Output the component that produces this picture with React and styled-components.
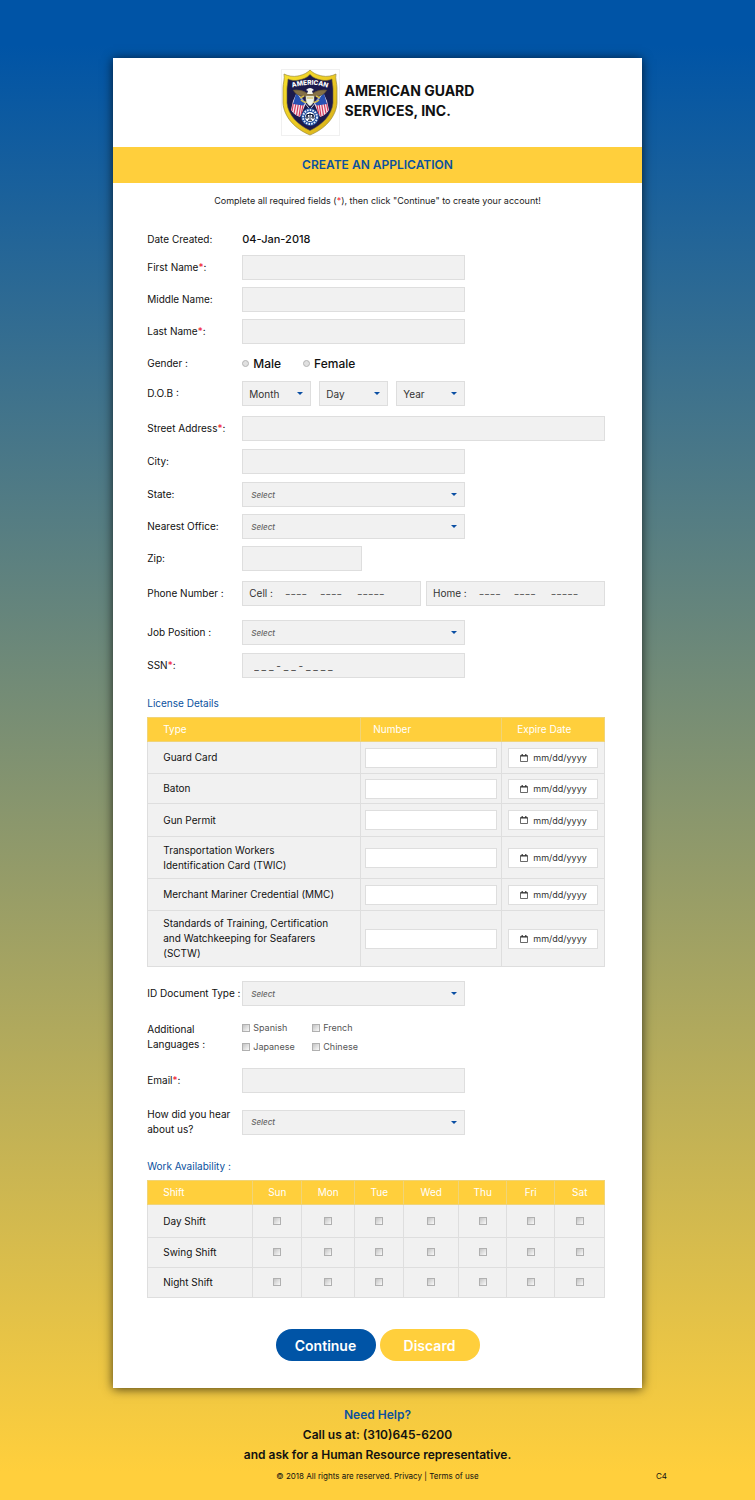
import styled, { createGlobalStyle } from "styled-components";

const days = [
  { name: "Sun", width: 49 },
  { name: "Mon", width: 53 },
  { name: "Tue", width: 49 },
  { name: "Wed", width: 55 },
  { name: "Thu", width: 48 },
  { name: "Fri", width: 48 },
  { name: "Sat", width: 50 },
];

const licenses = [
  { name: "Guard Card", height: 32 },
  { name: "Baton", height: 30 },
  { name: "Gun Permit", height: 33 },
  { name: "Transportation Workers Identification Card (TWIC)", height: 42 },
  { name: "Merchant Mariner Credential (MMC)", height: 32 },
  {
    name: "Standards of Training, Certification and Watchkeeping for Seafarers (SCTW)",
    height: 56,
  },
];

const shifts = [
  { name: "Day Shift", height: 33 },
  { name: "Swing Shift", height: 30 },
  { name: "Night Shift", height: 30 },
];

function Flag() {
  return (
    <g>
      <path d="M16 23 L25 34 L19 48 Q13 46 10 41 L12 32 Z" fill="#f6e6ec" />
      <path
        d="M12.500 34 L11 42 M15 34 L13 44.500 M17.500 34 L15.500 46.500 M20 34 L18 47.500 M22.500 34 L20 46"
        stroke="#d23a5c"
        strokeWidth="1.200"
      />
      <path d="M15.500 23 L25 34 L22 36.500 L12 35 Z" fill="#2750b4" />
      <path d="M15 23 L31 43" stroke="#cfd6e8" strokeWidth="0.900" />
    </g>
  );
}

function Badge() {
  return (
    <svg width="59" height="67" viewBox="0 0 59 67" role="img" aria-label="American Guard Services">
      <defs>
        <linearGradient id="gold" x1="0" y1="0" x2="1" y2="1">
          <stop offset="0" stopColor="#f7e12e" />
          <stop offset="0.5" stopColor="#ecca22" />
          <stop offset="1" stopColor="#d4ac18" />
        </linearGradient>
        <path id="arcTop" d="M9 19.500 Q29 12 49 19.500" />
      </defs>
      <rect x="0.500" y="0.500" width="58" height="66" fill="#fff" stroke="#f0f0f0" />
      <path
        d="M29 1 C25 5 21 6 17 7 C12 8 7 7 3 5 C4 10 2 14 2 19 L2 34 C3 48 14 60 29 66 C44 60 55 48 56 34 L56 19 C56 14 54 10 55 5 C51 7 46 8 41 7 C37 6 33 5 29 1 Z"
        fill="url(#gold)"
        stroke="#9b8a3a"
        strokeWidth="0.700"
      />
      <path
        d="M29 5.500 C26 9 22 10 18 11 C14 12 10 11.500 7 10 C7 14 6 17 6 20 L6 34 C7 46 17 56 29 61.500 C41 56 51 46 52 34 L52 20 C52 17 51 14 51 10 C48 11.500 44 12 40 11 C36 10 32 9 29 5.500 Z"
        fill="#1c1a4c"
        stroke="#6e6136"
        strokeWidth="0.600"
      />
      <text fill="#fff" fontFamily="Inter, sans-serif" fontSize="6.500" fontWeight="800" textAnchor="middle">
        <textPath href="#arcTop" startOffset="50%">
          AMERICAN
        </textPath>
      </text>
      <Flag />
      <g transform="translate(58 0) scale(-1 1)">
        <Flag />
      </g>
      <path
        d="M26 24 Q20 20 12 21 Q15 27 24 27.500 L27 30 H31 L34 27.500 Q43 27 46 21 Q38 20 32 24 Z"
        fill="#857047"
        stroke="#4d4330"
        strokeWidth="0.500"
      />
      <path d="M25 21 Q29 17 33 21 L31 22 L32 25 H26 L27 22 Z" fill="#f4f4ee" />
      <path d="M19 29 L23 27 M39 29 L35 27 M20 31 Q23 34 26 33 M38 31 Q35 34 32 33" fill="none" stroke="#d5bd4c" strokeWidth="1.600" />
      <path d="M25 27 H33 V31 Q32.500 35 29 37 Q25.500 35 25 31 Z" fill="#eef2e8" stroke="#b9b58a" strokeWidth="0.500" />
      <path d="M26 29 H32" stroke="#c9b244" strokeWidth="1" />
      <circle cx="29" cy="48" r="9" fill="#1f4c9c" />
      <circle cx="29" cy="48" r="7" fill="none" stroke="#e4eefa" strokeWidth="2" strokeDasharray="1.700 1" />
      <circle cx="29" cy="48" r="5" fill="#fff" />
      <path
        d="M29 44 V51 M26 45.500 H32 M26 45.500 L24.800 49 H27.200 Z M32 45.500 L30.800 49 H33.200 Z M27 51.300 H31"
        fill="none"
        stroke="#111a38"
        strokeWidth="1"
      />
    </svg>
  );
}

function CalendarIcon() {
  return (
    <svg width="8" height="8" viewBox="0 0 8 8" aria-hidden="true">
      <path d="M0.500 1.500 H7.500 V7.500 H0.500 Z" fill="none" stroke="#444" strokeWidth="0.800" />
      <path d="M0.500 2 H7.500 M2.200 0 V2 M5.800 0 V2" stroke="#333" strokeWidth="1.200" />
    </svg>
  );
}

function Dropdown({ id, label, text = "Select", hint = true }) {
  return (
    <SelectWrap>
      <Select id={id} aria-label={label} $hint={hint}>
        <option>{text}</option>
      </Select>
      <Caret width="6" height="3" viewBox="0 0 6 3" aria-hidden="true">
        <path d="M0 0 H6 L3 3 Z" fill="#0a4fa3" />
      </Caret>
    </SelectWrap>
  );
}

function Phone({ name }) {
  return (
    <PhoneBox role="group" aria-label={name + " phone"}>
      <span>{name} :</span>
      <PhonePart aria-label={name + " area code"} placeholder="----" />
      <PhonePart aria-label={name + " prefix"} placeholder="----" />
      <PhonePart aria-label={name + " line number"} placeholder="-----" $last />
    </PhoneBox>
  );
}

export default function App() {
  return (
    <>
      <GlobalStyle />
      <Page>
        <Card>
          <Header>
            <Badge />
            <Company>
              AMERICAN GUARD
              <br />
              SERVICES, INC.
            </Company>
          </Header>
          <Banner>CREATE AN APPLICATION</Banner>
          <Intro>
            Complete all required fields (<Star>*</Star>), then click "Continue" to create your account!
          </Intro>

          <Form onSubmit={(e) => e.preventDefault()}>
            <Row $gap={0}>
              <Label as="span">Date Created:</Label>
              <Created>04-Jan-2018</Created>
            </Row>
            <Row $gap={3}>
              <Label htmlFor="first">
                First Name<Star>*</Star>:
              </Label>
              <Half>
                <Field id="first" />
              </Half>
            </Row>
            <Row $gap={7}>
              <Label htmlFor="middle">Middle Name:</Label>
              <Half>
                <Field id="middle" />
              </Half>
            </Row>
            <Row $gap={7}>
              <Label htmlFor="last">
                Last Name<Star>*</Star>:
              </Label>
              <Half>
                <Field id="last" />
              </Half>
            </Row>
            <Row $gap={7}>
              <Label as="span">Gender :</Label>
              <Genders>
                <Choice>
                  <Radio name="gender" /> Male
                </Choice>
                <Choice>
                  <Radio name="gender" /> Female
                </Choice>
              </Genders>
            </Row>
            <Row $gap={5}>
              <Label as="span">D.O.B :</Label>
              <Birth>
                <Dropdown label="Month" text="Month" hint={false} />
                <Dropdown label="Day" text="Day" hint={false} />
                <Dropdown label="Year" text="Year" hint={false} />
              </Birth>
            </Row>
            <Row $gap={10}>
              <Label htmlFor="street">
                Street Address<Star>*</Star>:
              </Label>
              <Field id="street" />
            </Row>
            <Row>
              <Label htmlFor="city">City:</Label>
              <Half>
                <Field id="city" />
              </Half>
            </Row>
            <Row>
              <Label htmlFor="state">State:</Label>
              <Half>
                <Dropdown id="state" />
              </Half>
            </Row>
            <Row $gap={7}>
              <Label htmlFor="office">Nearest Office:</Label>
              <Half>
                <Dropdown id="office" />
              </Half>
            </Row>
            <Row $gap={7}>
              <Label htmlFor="zip">Zip:</Label>
              <Third>
                <Field id="zip" />
              </Third>
            </Row>
            <Row $gap={10}>
              <Label as="span">Phone Number :</Label>
              <Phones>
                <Phone name="Cell" />
                <Phone name="Home" />
              </Phones>
            </Row>
            <Row $gap={14}>
              <Label htmlFor="job">Job Position :</Label>
              <Half>
                <Dropdown id="job" />
              </Half>
            </Row>
            <Row>
              <Label htmlFor="ssn">
                SSN<Star>*</Star>:
              </Label>
              <Half>
                <Field id="ssn" placeholder="_ _ _ - _ _ - _ _ _ _" />
              </Half>
            </Row>

            <SectionTitle $gap={18}>License Details</SectionTitle>
            <Table>
              <colgroup>
                <Col $width={213} />
                <Col $width={141} />
                <Col $width={103} />
              </colgroup>
              <thead>
                <tr>
                  <Th $pad={15}>Type</Th>
                  <Th $pad={12}>Number</Th>
                  <Th $pad={15}>Expire Date</Th>
                </tr>
              </thead>
              <tbody>
                {licenses.map((item) => (
                  <TableRow key={item.name} $height={item.height}>
                    <NameCell>{item.name}</NameCell>
                    <NumberCell>
                      <WhiteField aria-label={item.name + " number"} />
                    </NumberCell>
                    <DateCell>
                      <DateBox>
                        <CalendarIcon />
                        <DateInput aria-label={item.name + " expire date"} placeholder="mm/dd/yyyy" />
                      </DateBox>
                    </DateCell>
                  </TableRow>
                ))}
              </tbody>
            </Table>

            <Row $gap={14}>
              <Label htmlFor="document">ID Document Type :</Label>
              <Half>
                <Dropdown id="document" />
              </Half>
            </Row>
            <Row $gap={14}>
              <Label as="span">
                Additional
                <br />
                Languages :
              </Label>
              <Languages>
                {["Spanish", "French", "Japanese", "Chinese"].map((language) => (
                  <Language key={language}>
                    <Checkbox /> {language}
                  </Language>
                ))}
              </Languages>
            </Row>
            <Row $gap={14}>
              <Label htmlFor="email">
                Email<Star>*</Star>:
              </Label>
              <Half>
                <Field id="email" type="email" />
              </Half>
            </Row>
            <Row $gap={14}>
              <Label htmlFor="hear">
                How did you hear
                <br />
                about us?
              </Label>
              <Half>
                <Dropdown id="hear" />
              </Half>
            </Row>

            <SectionTitle $gap={22}>Work Availability :</SectionTitle>
            <Table>
              <colgroup>
                <Col $width={105} />
                {days.map((day) => (
                  <Col key={day.name} $width={day.width} />
                ))}
              </colgroup>
              <thead>
                <tr>
                  <Th $pad={15}>Shift</Th>
                  {days.map((day) => (
                    <Th key={day.name} $center>
                      {day.name}
                    </Th>
                  ))}
                </tr>
              </thead>
              <tbody>
                {shifts.map((shift) => (
                  <TableRow key={shift.name} $height={shift.height}>
                    <NameCell>{shift.name}</NameCell>
                    {days.map((day) => (
                      <CheckCell key={day.name}>
                        <Checkbox aria-label={shift.name + " " + day.name} />
                      </CheckCell>
                    ))}
                  </TableRow>
                ))}
              </tbody>
            </Table>

            <Actions>
              <Button type="submit">Continue</Button>
              <Button type="button" $yellow>
                Discard
              </Button>
            </Actions>
          </Form>
        </Card>

        <Footer>
          <Help>
            <a href="#help">Need Help?</a>
            <br />
            Call us at: (310)645-6200
            <br />
            and ask for a Human Resource representative.
          </Help>
          <Legal>
            <span>
              © 2018 All rights are reserved. <a href="#privacy">Privacy</a> | <a href="#terms">Terms of use</a>
            </span>
            <Code>C4</Code>
          </Legal>
        </Footer>
      </Page>
    </>
  );
}

const GlobalStyle = createGlobalStyle`
  * {
    box-sizing: border-box;
  }

  body {
    margin: 0;
    font-family: Inter, "Liberation Sans", sans-serif;
    font-size: 10px;
    line-height: 15px;
    color: #111;
  }

  input, select, button {
    font-family: inherit;
    margin: 0;
  }

  a {
    color: inherit;
    text-decoration: none;
  }
`;

const Page = styled.div`
  min-height: 100vh;
  padding-top: 58px;
  background: linear-gradient(#0054a6 3%, #ffcf3c 98%);
`;

const Card = styled.main`
  width: 70%;
  margin: 0 auto;
  background: #fff;
  box-shadow: 0 1px 10px rgba(0, 0, 0, 0.7);
`;

const Header = styled.header`
  display: flex;
  justify-content: center;
  align-items: center;
  gap: 5px;
  height: 89px;
`;

const Company = styled.div`
  padding-bottom: 4px;
  font-size: 14px;
  line-height: 20px;
  font-weight: 700;
`;

const Banner = styled.h1`
  margin: 0;
  padding: 8px;
  background: #ffcf3c;
  color: #0b519e;
  font-size: 12px;
  line-height: 20px;
  font-weight: 600;
  text-align: center;
`;

const Intro = styled.p`
  margin: 10px 0 0;
  font-size: 9px;
  text-align: center;
  color: #222;
`;

const Star = styled.span`
  color: #f0142f;
`;

const Form = styled.form`
  padding: 19px 37px 27px 34px;
`;

const Row = styled.div`
  display: grid;
  grid-template-columns: 95px 1fr;
  align-items: center;
  min-height: 25px;
  margin-top: ${({ $gap = 8 }) => $gap}px;
`;

const Label = styled.label`
  white-space: nowrap;
`;

const Created = styled.span`
  font-size: 11px;
  font-weight: 500;
`;

const Half = styled.div`
  width: 100%;
  max-width: 223px;
`;

const Third = styled.div`
  width: 33%;
`;

const Field = styled.input`
  display: block;
  width: 100%;
  height: 25px;
  padding: 0 11px;
  border: 1px solid #dedede;
  background: #f1f1f1;
  font-size: 10px;

  &::placeholder {
    color: #444;
  }
`;

const SelectWrap = styled.div`
  position: relative;
`;

const Select = styled.select`
  display: block;
  appearance: none;
  width: 100%;
  height: 25px;
  padding: 0 ${({ $hint }) => ($hint ? 8 : 6)}px;
  border: 1px solid #dedede;
  border-radius: 0;
  background: #f1f1f1;
  color: ${({ $hint }) => ($hint ? "#666" : "#333")};
  font-size: ${({ $hint }) => ($hint ? 8 : 10)}px;
  font-style: ${({ $hint }) => ($hint ? "italic" : "normal")};
  font-weight: ${({ $hint }) => ($hint ? 500 : 400)};
`;

const Caret = styled.svg`
  position: absolute;
  top: 11px;
  right: 8px;
  pointer-events: none;
`;

const Genders = styled.div`
  display: flex;
  gap: 22px;
`;

const Choice = styled.label`
  display: flex;
  align-items: center;
  gap: 4px;
  font-size: 12px;
  font-weight: 500;
`;

const Radio = styled.input.attrs({ type: "radio" })`
  appearance: none;
  width: 7px;
  height: 7px;
  border: 1px solid #b4b4b4;
  border-radius: 50%;
  background: #e0e0e0;
`;

const Birth = styled.div`
  display: grid;
  grid-template-columns: 1fr 1fr 1fr;
  gap: 8px;
  width: 100%;
  max-width: 223px;
`;

const Phones = styled.div`
  display: grid;
  grid-template-columns: 1fr 1fr;
  gap: 5px;
`;

const PhoneBox = styled.div`
  display: flex;
  align-items: center;
  gap: 12px;
  height: 25px;
  padding: 0 6px;
  border: 1px solid #dedede;
  background: #f1f1f1;
  color: #333;
`;

const PhonePart = styled.input`
  width: ${({ $last }) => ($last ? 32 : 23)}px;
  margin-left: ${({ $last }) => ($last ? 2 : 0)}px;
  padding: 0;
  border: 0;
  background: transparent;
  font-size: 12px;

  &::placeholder {
    color: #666;
  }
`;

const SectionTitle = styled.h2`
  margin: ${({ $gap }) => $gap}px 0 6px;
  color: #0b519e;
  font-size: 10px;
  line-height: 15px;
  font-weight: 400;
`;

const Table = styled.table`
  width: 100%;
  border-collapse: collapse;
  table-layout: fixed;
  background: #f1f1f1;
`;

const Col = styled.col`
  width: ${({ $width }) => $width}px;
`;

const Th = styled.th`
  height: 24px;
  padding: 0 0 0 ${({ $pad = 0 }) => $pad}px;
  border: 1px solid #f0d478;
  background: #ffcf3c;
  color: #fff;
  font-weight: 400;
  text-align: ${({ $center }) => ($center ? "center" : "left")};
`;

const TableRow = styled.tr`
  height: ${({ $height }) => $height}px;
`;

const Cell = styled.td`
  padding: 0;
  border: 1px solid #dedede;
`;

const NameCell = styled(Cell)`
  padding: 0 25px 0 15px;
`;

const NumberCell = styled(Cell)`
  padding: 0 4px;
`;

const DateCell = styled(Cell)`
  padding: 0 6px;
`;

const CheckCell = styled(Cell)`
  text-align: center;
`;

const WhiteField = styled.input`
  display: block;
  width: 100%;
  height: 20px;
  border: 1px solid #dedede;
  background: #fff;
  font-size: 10px;
`;

const DateBox = styled.label`
  display: flex;
  align-items: center;
  gap: 5px;
  height: 20px;
  padding-left: 11px;
  border: 1px solid #dedede;
  background: #fff;
`;

const DateInput = styled.input`
  flex: 1;
  min-width: 0;
  padding: 0;
  border: 0;
  background: transparent;
  font-size: 9px;

  &::placeholder {
    color: #333;
  }
`;

const Checkbox = styled.input.attrs({ type: "checkbox" })`
  appearance: none;
  width: 8px;
  height: 8px;
  border: 1px solid #b0b0b0;
  background: linear-gradient(135deg, #c4c4c4, #fafafa);
`;

const Languages = styled.div`
  display: grid;
  grid-template-columns: 70px 70px;
  row-gap: 4px;
`;

const Language = styled.label`
  display: flex;
  align-items: center;
  gap: 3px;
  font-size: 9px;
  color: #555;
`;

const Actions = styled.div`
  display: flex;
  justify-content: center;
  gap: 4px;
  margin-top: 31px;
  padding-left: 3px;
`;

const Button = styled.button`
  width: 100px;
  height: 32px;
  padding: 0;
  border: 0;
  border-radius: 16px;
  background: ${({ $yellow }) => ($yellow ? "#ffcf3c" : "#0054a6")};
  color: #fff;
  font-size: 14px;
  font-weight: 600;
`;

const Footer = styled.footer`
  padding: 17px 0;
  text-align: center;
`;

const Help = styled.p`
  margin: 0;
  font-size: 12px;
  line-height: 20px;
  font-weight: 600;

  & a {
    color: #0b519e;
  }
`;

const Legal = styled.div`
  position: relative;
  margin-top: 4px;
  font-size: 8px;
`;

const Code = styled.span`
  position: absolute;
  right: 88px;
`;
